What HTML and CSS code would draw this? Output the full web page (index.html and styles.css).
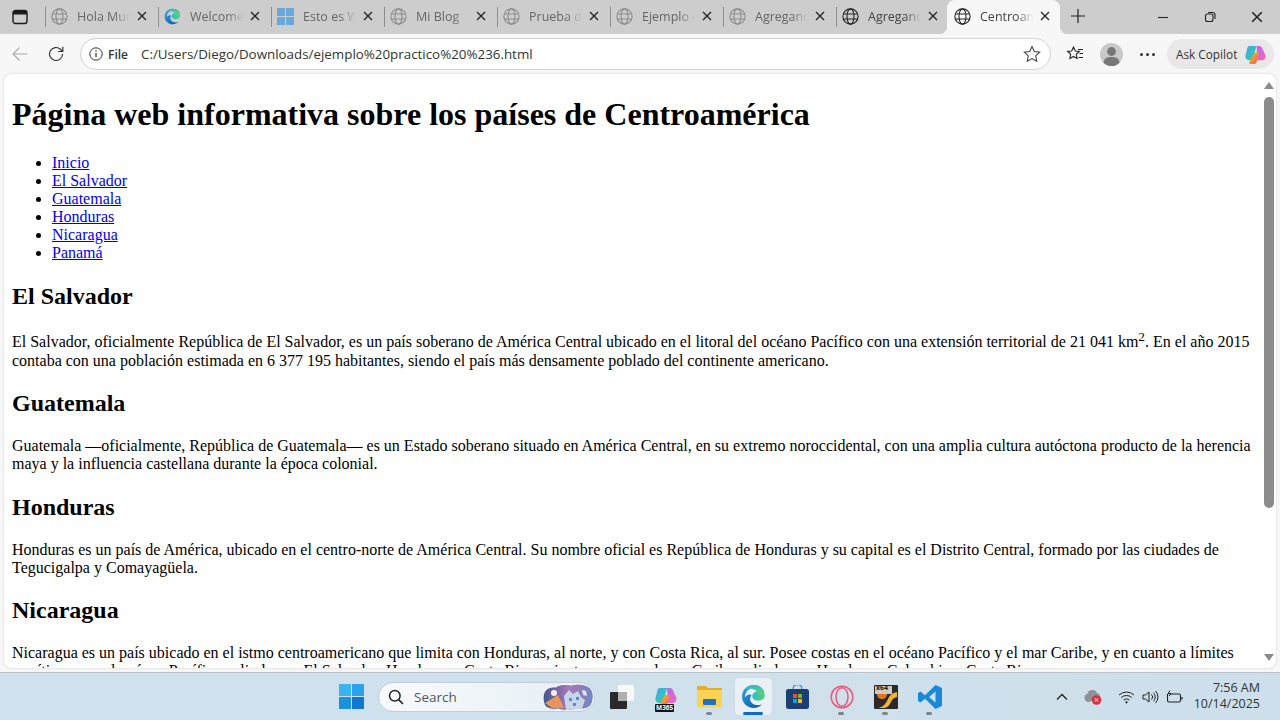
FILE: index.html
```html
<!DOCTYPE html>
<html lang="es">
<head>
<meta charset="utf-8">
<title>Centroamérica</title>
<link rel="stylesheet" href="styles.css">
</head>
<body>
<svg class="defs" width="0" height="0">
  <defs>
    <symbol id="globe" viewBox="0 0 16 16"><g fill="none" stroke="currentColor" stroke-width="1"><circle cx="8" cy="8" r="7.2"/><ellipse cx="8" cy="8" rx="3.3" ry="7.2"/><path d="M1 5.600h14M1 10.400h14"/></g></symbol>
    <symbol id="x" viewBox="0 0 10 10"><path d="M1 1l8 8M9 1l-8 8" fill="none" stroke="currentColor" stroke-width="1.300"/></symbol>
    <linearGradient id="edgeA" x1="0" y1="0" x2="1" y2="1"><stop offset="0" stop-color="#2ba8e6"/><stop offset="1" stop-color="#0b4f9e"/></linearGradient>
    <linearGradient id="edgeB" x1="0" y1="0" x2="1" y2="1"><stop offset="0" stop-color="#27b3d8"/><stop offset="1" stop-color="#63d571"/></linearGradient>
    <linearGradient id="copA" x1="0" y1="0" x2="1" y2="1"><stop offset="0" stop-color="#39a7f0"/><stop offset="1" stop-color="#3fd08f"/></linearGradient>
    <linearGradient id="copB" x1="0" y1="0" x2="1" y2="1"><stop offset="0" stop-color="#b56bf0"/><stop offset="1" stop-color="#f06ab0"/></linearGradient>
    <linearGradient id="copC" x1="0" y1="0" x2="1" y2="1"><stop offset="0" stop-color="#f5c33b"/><stop offset="1" stop-color="#f2553f"/></linearGradient>
    <linearGradient id="artSky" x1="0" y1="0" x2="1" y2="0"><stop offset="0" stop-color="#3d5590"/><stop offset=".5" stop-color="#a878b8"/><stop offset="1" stop-color="#6f87c0"/></linearGradient>
    <symbol id="edge" viewBox="0 0 24 24">
      <path d="M12 1C5.500 1 1 6 1 12c0 6.500 5 11 11 11 3.500 0 6.300-1.200 8.300-3.500-2.500 1.300-7 1.300-9.300-.7-2.500-2.100-3-5.500-.8-7.800C8 9 5 11 3.700 13 4 7 8 3.500 12 3.500c5 0 7 4 6 6.500h4C23 5.500 18.500 1 12 1z" fill="url(#edgeA)"/>
      <path d="M22.800 11c0 3.500-3.500 5.500-6.800 5-3.300-.5-5.200-2-5.200-4.300 0-2.400 2.200-4.200 4.700-4.200 3 0 7.300 0 7.300 3.500z" fill="url(#edgeB)"/>
      <path d="M12 1C8 1 5 3 3.500 6.500 6 4 9 3.800 12 5c3 1.200 4 3 3.500 5h7C23 5.500 18.500 1 12 1z" fill="url(#edgeB)"/>
    </symbol>
    <symbol id="copilot" viewBox="0 0 24 24">
      <path d="M6 3h7l-4 15H6c-3 0-5-2-4.500-5L3 7c.5-2.500 1-4 3-4z" fill="url(#copA)"/>
      <path d="M13 3h3c2 0 3 1.500 3.500 3.500L22.500 13c.5 3-1.500 5-4 5H14z" fill="url(#copB)"/>
      <path d="M11 10h5l-2.500 9c-.5 2-2 3-3.500 3H7c-1.500 0-2-1-1.500-2z" fill="url(#copC)"/>
    </symbol>
  </defs>
</svg>

<header class="tabstrip">
  <div class="strip-menu">
    <svg width="16" height="16" viewBox="0 0 16 16"><rect x="1" y="1.500" width="14" height="13" rx="2.500" fill="none" stroke="#1a1a1a" stroke-width="1.400"/><path d="M1 3.500a2 2 0 0 1 2-2h10a2 2 0 0 1 2 2v2H1z" fill="#1a1a1a"/></svg>
  </div>
  <div class="tab"><svg class="fav dim"><use href="#globe"/></svg><span class="tab-title dim-text">Hola Mundo</span><svg class="tab-x"><use href="#x"/></svg></div>
  <div class="tab"><svg class="fav" viewBox="0 0 24 24"><use href="#edge"/></svg><span class="tab-title dim-text">Welcome</span><svg class="tab-x"><use href="#x"/></svg></div>
  <div class="tab"><svg class="fav" viewBox="0 0 16 16"><path d="M0 0h7.500v7.500H0zM8.500 0H16v7.500H8.500zM0 8.500h7.500V16H0zM8.500 8.500H16V16H8.500z" fill="#6aa8dc"/></svg><span class="tab-title dim-text">Esto es Wix</span><svg class="tab-x"><use href="#x"/></svg></div>
  <div class="tab"><svg class="fav dim"><use href="#globe"/></svg><span class="tab-title dim-text">Mi Blog</span><svg class="tab-x"><use href="#x"/></svg></div>
  <div class="tab"><svg class="fav dim"><use href="#globe"/></svg><span class="tab-title dim-text">Prueba de</span><svg class="tab-x"><use href="#x"/></svg></div>
  <div class="tab"><svg class="fav dim"><use href="#globe"/></svg><span class="tab-title dim-text">Ejemplo 4</span><svg class="tab-x"><use href="#x"/></svg></div>
  <div class="tab"><svg class="fav dim"><use href="#globe"/></svg><span class="tab-title dim-text">Agregando</span><svg class="tab-x"><use href="#x"/></svg></div>
  <div class="tab"><svg class="fav"><use href="#globe"/></svg><span class="tab-title">Agregando</span><svg class="tab-x"><use href="#x"/></svg></div>
  <div class="tab tab-active"><svg class="fav"><use href="#globe"/></svg><span class="tab-title">Centroamérica</span><svg class="tab-x"><use href="#x"/></svg></div>
  <div class="new-tab"><svg width="16" height="16" viewBox="0 0 16 16"><path d="M8 1v14M1 8h14" stroke="#222" stroke-width="1.200" fill="none"/></svg></div>
  <div class="win-controls">
    <svg width="12" height="12" viewBox="0 0 12 12"><path d="M1 6.500h10" stroke="#222" stroke-width="1.100"/></svg>
    <svg width="12" height="12" viewBox="0 0 12 12"><rect x="1.500" y="3" width="7.500" height="7.500" rx="2" fill="none" stroke="#222" stroke-width="1.100"/><path d="M4 1.500h4.500a2.500 2.500 0 0 1 2.500 2.500v4" fill="none" stroke="#222" stroke-width="1.100"/></svg>
    <svg width="12" height="12" viewBox="0 0 10 10"><use href="#x"/></svg>
  </div>
</header>

<nav class="toolbar">
  <svg class="tb-back" width="16" height="16" viewBox="0 0 16 16"><path d="M15.500 8H1M7.500 1.500L1 8l6.500 6.500" fill="none" stroke="#a9a9a9" stroke-width="1.100"/></svg>
  <svg class="tb-reload" width="18" height="18" viewBox="0 0 18 18"><path d="M15.500 9a6.500 6.500 0 1 1-2-4.700L15.500 6.300M15.800 1.800v4.700h-4.700" fill="none" stroke="#333" stroke-width="1.200"/></svg>
  <div class="address">
    <svg class="addr-info" width="14" height="14" viewBox="0 0 14 14"><circle cx="7" cy="7" r="6.200" fill="none" stroke="#333" stroke-width="1"/><path d="M7 6v4.200" stroke="#333" stroke-width="1.200"/><circle cx="7" cy="4" r=".8" fill="#333"/></svg>
    <span class="addr-file">File</span>
    <span class="addr-url">C:/Users/Diego/Downloads/ejemplo%20practico%20%236.html</span>
    <svg class="addr-star" width="18" height="18" viewBox="0 0 18 18"><path d="M9 1.600l2.300 4.900 5.300.7-3.900 3.700 1 5.300L9 13.600l-4.700 2.600 1-5.300L1.400 7.200l5.300-.7z" fill="none" stroke="#444" stroke-width="1.100"/></svg>
  </div>
  <svg class="tb-fav" width="18" height="18" viewBox="0 0 18 18"><path d="M7.500 2l1.800 4 4 .5-3 2.800.8 4.200-3.600-2-3.600 2 .8-4.200-3-2.800 4-.5z" fill="none" stroke="#222" stroke-width="1.100"/><path d="M12 4.500h5M13.500 8.500h3.500M12.500 12.500h4.500" stroke="#222" stroke-width="1"/></svg>
  <div class="avatar"><svg width="23" height="23" viewBox="0 0 23 23"><circle cx="11.500" cy="8.500" r="4.400" fill="#777"/><path d="M3.500 20c0-4.500 3.500-6 8-6s8 1.500 8 6a11 11 0 0 1-16 0z" fill="#777"/></svg></div>
  <div class="dots"><i></i><i></i><i></i></div>
  <div class="copilot-btn"><span>Ask Copilot</span><svg width="23" height="23" viewBox="0 0 24 24"><use href="#copilot"/></svg></div>
</nav>

<main class="viewport">
  <div class="page">
    <h1>Página web informativa sobre los países de Centroamérica</h1>
    <ul>
      <li><a href="#inicio">Inicio</a></li>
      <li><a href="#sv">El Salvador</a></li>
      <li><a href="#gt">Guatemala</a></li>
      <li><a href="#hn">Honduras</a></li>
      <li><a href="#ni">Nicaragua</a></li>
      <li><a href="#pa">Panamá</a></li>
    </ul>
    <h2>El Salvador</h2>
    <p>El Salvador, oficialmente República de El Salvador, es un país soberano de América Central ubicado en el litoral del océano Pacífico con una extensión territorial de 21 041 km<sup>2</sup>. En el año 2015 contaba con una población estimada en 6 377 195 habitantes, siendo el país más densamente poblado del continente americano.</p>
    <h2>Guatemala</h2>
    <p>Guatemala —oficialmente, República de Guatemala— es un Estado soberano situado en América Central, en su extremo noroccidental, con una amplia cultura autóctona producto de la herencia maya y la influencia castellana durante la época colonial.</p>
    <h2>Honduras</h2>
    <p>Honduras es un país de América, ubicado en el centro-norte de América Central. Su nombre oficial es República de Honduras y su capital es el Distrito Central, formado por las ciudades de Tegucigalpa y Comayagüela.</p>
    <h2>Nicaragua</h2>
    <p>Nicaragua es un país ubicado en el istmo centroamericano que limita con Honduras, al norte, y con Costa Rica, al sur. Posee costas en el océano Pacífico y el mar Caribe, y en cuanto a límites marítimos, en el océano Pacífico colinda con El Salvador, Honduras y Costa Rica, mientras que en el mar Caribe colinda con Honduras, Colombia y Costa Rica.</p>
  </div>
  <div class="scrollbar">
    <i class="arrow-up"></i>
    <div class="track"><div class="thumb"></div></div>
    <i class="arrow-down"></i>
  </div>
</main>

<footer class="taskbar">
  <div class="task-center">
    <svg class="start" width="25" height="25" viewBox="0 0 25 25"><path d="M0 0h12v12H0z" fill="#39b4f0"/><path d="M13 0h12v12H13z" fill="#2ba3ea"/><path d="M0 13h12v12H0z" fill="#1c8fdf"/><path d="M13 13h12v12H13z" fill="#0f78cf"/></svg>
    <div class="search">
      <svg width="16" height="16" viewBox="0 0 16 16"><circle cx="6.800" cy="6.800" r="5.300" fill="none" stroke="#222" stroke-width="1.500"/><path d="M10.600 10.600L15 15" stroke="#222" stroke-width="1.600"/></svg>
      <span>Search</span>
      <svg class="search-art" width="52" height="28" viewBox="0 0 52 28">
        <path d="M1 15C1 7 7 3 14 4c3-3 10-3 15-2 7-2 16-1 20 4 3 4 3 11 0 16-3 4-9 5-14 4-6 2-14 2-19 0-5 1-10 0-13-3C2 21 1 18 1 15z" fill="url(#artSky)" stroke="#fff" stroke-width="1"/>
        <circle cx="12" cy="10" r="3" fill="#f6f2ea"/>
        <path d="M3 20l13-8 6 13H10z" fill="#e8955a"/>
        <path d="M22 13l5-6 4 4 5-3 3 6 4 3-3 9-16 1z" fill="#c6d6ea"/>
        <path d="M27 15h3v3h-3zM34 14h3v3h-3zM31 20h3v3h-3z" fill="#6d84b4"/>
        <path d="M40 7l4 1 1 5-4-1z" fill="#dce6f2"/>
      </svg>
    </div>
    <div class="task-icons">
      <div class="ti"><svg width="24" height="24" viewBox="0 0 24 24"><rect x="8" y="0" width="16" height="16" rx="1" fill="#f6f8fa"/><rect x="0" y="7" width="17" height="17" rx="1" fill="#2a2a2a"/><rect x="8" y="7" width="9" height="9" fill="#b0b0b0"/></svg></div>
      <div class="ti ti-m365"><svg width="24" height="24" viewBox="0 0 24 24"><use href="#copilot"/></svg><span>M365</span></div>
      <div class="ti ti-run"><svg width="25" height="23" viewBox="0 0 25 23"><path d="M0 2a1 1 0 0 1 1-1h8l2 2h14v4H0z" fill="#e3ad2a"/><path d="M0 5h25v16a1.500 1.500 0 0 1-1.500 1.500h-22A1.500 1.500 0 0 1 0 21z" fill="#fbd354"/><rect x="6" y="14" width="13" height="6" rx="1" fill="#1a73c8"/></svg></div>
      <div class="ti ti-active"><svg width="25" height="25" viewBox="0 0 24 24"><use href="#edge"/></svg></div>
      <div class="ti"><svg width="23" height="24" viewBox="0 0 23 24"><path d="M7 4a4.500 4.500 0 0 1 9 0" fill="none" stroke="#2f8fd8" stroke-width="1.300"/><rect x="0" y="4" width="23" height="20" rx="2.500" fill="#1c3f73"/><rect x="7" y="9" width="4" height="4" fill="#f25022"/><rect x="12" y="9" width="4" height="4" fill="#7fba00"/><rect x="7" y="14" width="4" height="4" fill="#00a4ef"/><rect x="12" y="14" width="4" height="4" fill="#ffb900"/></svg></div>
      <div class="ti ti-run"><svg width="24" height="24" viewBox="0 0 24 24"><circle cx="12" cy="12" r="10.800" fill="none" stroke="#e85a7a" stroke-width="1.500"/><ellipse cx="12" cy="12" rx="6" ry="9.300" fill="none" stroke="#e85a7a" stroke-width="1.500"/></svg></div>
      <div class="ti ti-run ti-x64"><svg width="24" height="24" viewBox="0 0 24 24"><rect width="24" height="24" rx="1" fill="#2a2a2a"/><rect x="1" y="1" width="17" height="8" fill="#cfcabd"/><path d="M3 9h10c0 3-2 5-5 5s-5-2-5-5z" fill="#e0761c"/><path d="M4 23c6-1 8-5 10-9s4-6 9-7v5c-4 1-5 3-6 5s-3 6-7 6z" fill="#f2b23a"/></svg><span>x64</span></div>
      <div class="ti ti-run"><svg width="24" height="24" viewBox="0 0 24 24"><path d="M17.500 0L24 3v18l-6.500 3L7 13.800 2.500 17.500 0 16V8l2.500-1.500L7 10.200zM17.500 6.500L11 12l6.500 5.500z" fill="#1b8ad6" fill-rule="evenodd"/></svg></div>
    </div>
  </div>
  <div class="tray">
    <svg class="tray-chev" width="12" height="12" viewBox="0 0 12 12"><path d="M1 8.500L6 3.500l5 5" fill="none" stroke="#222" stroke-width="1.300"/></svg>
    <svg class="tray-cloud" width="18" height="16" viewBox="0 0 18 16"><path d="M5 13A4.200 4.200 0 0 1 3.500 4.800 5 5 0 0 1 13 4a4 4 0 0 1 3 4" fill="#8d9298"/><circle cx="12.500" cy="11" r="4.800" fill="#d8303c"/><path d="M10.800 9.300l3.400 3.400M14.200 9.300l-3.400 3.400" stroke="#fff" stroke-width="1"/></svg>
    <svg class="tray-wifi" width="17" height="14" viewBox="0 0 17 14"><path d="M1 5a11 11 0 0 1 15 0M3.300 7.500a7.700 7.700 0 0 1 10.400 0M5.700 10a4.300 4.300 0 0 1 5.600 0" fill="none" stroke="#222" stroke-width="1"/><circle cx="8.500" cy="12.300" r="1.100" fill="#222"/></svg>
    <svg class="tray-vol" width="17" height="14" viewBox="0 0 17 14"><path d="M1 5v4h2.500L7 12V2L3.500 5z" fill="none" stroke="#222" stroke-width="1"/><path d="M9.500 4.500a3.500 3.500 0 0 1 0 5M11.500 2.800a6 6 0 0 1 0 8.400M13.500 1a8.500 8.500 0 0 1 0 12" fill="none" stroke="#222" stroke-width="1"/></svg>
    <svg class="tray-bat" width="17" height="14" viewBox="0 0 17 14"><path d="M4 4h9a1.500 1.500 0 0 1 1.500 1.500v5A1.500 1.500 0 0 1 13 12H3a1.500 1.500 0 0 1-1.500-1.500V4" fill="none" stroke="#222" stroke-width="1.100"/><path d="M16 7v2.500" stroke="#222" stroke-width="1.200"/><path d="M4 .5L2 3.500h3L3 6" fill="none" stroke="#222" stroke-width="1"/></svg>
    <div class="clock"><div>7:56 AM</div><div>10/14/2025</div></div>
  </div>
</footer>
</body>
</html>
```
FILE: styles.css
```css
* { box-sizing: border-box; }
html, body { margin: 0; height: 100%; overflow: hidden; }
body {
  width: 1280px; height: 720px;
  display: flex; flex-direction: column;
  background: #f7f7f7;
  font-family: "Open Sans", "Noto Sans", sans-serif;
  color: #222;
}
.defs { position: absolute; }

/* Tab strip */
.tabstrip {
  height: 34px; flex: none;
  display: flex; align-items: stretch;
  background: #cdcdcd;
}
.strip-menu { width: 45px; display: flex; align-items: center; justify-content: center; padding-right: 6px; }
.tab {
  width: 113px; flex: none;
  display: flex; align-items: center;
  padding: 0 11px 2px 6px;
  position: relative;
  font-size: 12.5px;
}
.tab::before {
  content: ""; position: absolute; left: 0; top: 7px; bottom: 7px;
  width: 1px; background: #8e8e8e;
}
.tab-active {
  background: #f7f7f7;
  border-radius: 8px 8px 0 0;
  margin-left: -2px;
  padding-left: 7px;
  padding-right: 10px;
}
.tab-active::before {
  left: -8px; top: auto; bottom: 0; width: 8px; height: 8px;
  background: radial-gradient(circle at 0 0, transparent 8px, #f7f7f7 8.500px);
}
.tab-active::after {
  content: ""; position: absolute; right: -8px; bottom: 0; width: 8px; height: 8px;
  background: radial-gradient(circle at 100% 0, transparent 8px, #f7f7f7 8.500px);
}
.fav { width: 17px; height: 17px; flex: none; color: #222; }
.fav.dim { color: #8b8b8b; }
.tab-title {
  flex: 1; min-width: 0; margin-left: 9px;
  white-space: nowrap; overflow: hidden;
  color: #444;
  -webkit-mask-image: linear-gradient(to right, #000 70%, transparent 100%);
  mask-image: linear-gradient(to right, #000 70%, transparent 100%);
}
.dim-text { color: #666; }
.tab-x { width: 10px; height: 10px; flex: none; margin-left: 7px; color: #222; }
.new-tab { width: 36px; display: flex; align-items: center; justify-content: center; padding-bottom: 3px; }
.win-controls {
  margin-left: auto; display: flex; align-items: center;
  gap: 35px; padding: 0 17px 0 0; color: #222;
}

/* Toolbar */
.toolbar {
  height: 40px; flex: none;
  display: flex; align-items: center;
  background: #f7f7f7;
  padding: 0 5px 0 12px;
}
.tb-back { flex: none; }
.tb-reload { flex: none; margin-left: 19px; }
.address {
  flex: none; width: 971px; height: 32px; margin-left: 15px;
  display: flex; align-items: center;
  background: #fff; border: 1px solid #d3d3d3; border-radius: 16px;
  padding: 0 9px 0 8px;
}
.addr-info { flex: none; }
.addr-file { font-size: 12px; font-weight: 600; margin-left: 5px; color: #333; }
.addr-url { font-size: 13.36px; margin-left: 13px; color: #333; white-space: nowrap; }
.addr-star { margin-left: auto; flex: none; }
.tb-fav { flex: none; margin-left: 15px; }
.avatar {
  flex: none; width: 23px; height: 23px; margin-left: 16px;
  border-radius: 50%; background: #c9c9c9; overflow: hidden;
}
.avatar svg { display: block; }
.dots { flex: none; display: flex; gap: 3px; margin-left: 17px; }
.dots i { width: 3px; height: 3px; border-radius: 50%; background: #333; }
.copilot-btn {
  flex: none; margin-left: 12px; height: 30px; width: 107px;
  display: flex; align-items: center; justify-content: space-between;
  background: #e8e8e8; border-radius: 15px;
  padding: 0 7px 0 9px;
  font-size: 11.8px; color: #333; white-space: nowrap;
}

/* Viewport */
.viewport {
  flex: none; height: 594px; margin: 0 4px 0 4px;
  display: flex;
  background: #fff; border-radius: 8px;
  overflow: hidden;
  box-shadow: 0 0 2px rgba(0, 0, 0, .2);
}
.page {
  flex: 1; min-width: 0; height: 100%; overflow: hidden;
  padding: 22.4px 8px 0;
  font-family: "Liberation Serif", "Times New Roman", serif;
  font-size: 16px; color: #000;
}
.page h1 { font-size: 32px; font-weight: bold; margin: 0 0 20.5px; }
.page ul { margin: 16px 0; padding-left: 40px; }
.page a { color: #00e; }
.page h2 { font-size: 24px; font-weight: bold; margin: 20.7px 0 19.8px; }
.page p { margin: 16px 0; }
.scrollbar {
  flex: none; width: 14px; margin-right: 0;
  display: flex; flex-direction: column; align-items: center;
  padding: 8px 0 7px;
}
.arrow-up, .arrow-down { width: 0; height: 0; border-left: 5px solid transparent; border-right: 5px solid transparent; flex: none; }
.arrow-up { border-bottom: 7px solid #8a8a8a; }
.arrow-down { border-top: 7px solid #8a8a8a; }
.track { flex: 1; width: 100%; padding: 8px 2px; }
.thumb { width: 10px; height: 411px; background: #8c8c8c; border-radius: 5px; }

/* Taskbar */
.taskbar {
  flex: none; height: 48px; margin-top: 4px;
  display: flex; align-items: center;
  padding-left: 339px;
  background: linear-gradient(90deg, #cfe1ee, #d0e1ec 50%, #cddfea);
  border-top: 1px solid #b9c4cc;
}
.task-center { display: flex; align-items: center; }
.start { flex: none; }
.search {
  width: 217px; height: 30px; margin-left: 14px;
  display: flex; align-items: center;
  background: linear-gradient(90deg, #f7fafc, #e6eff5);
  border: 1px solid #c3cdd4; border-radius: 15px;
  padding: 0 0 0 9px;
  font-size: 13.5px; color: #555;
}
.search span { margin-left: 10px; }
.search-art { margin-left: auto; flex: none; }
.task-icons { display: flex; align-items: center; margin-left: 8px; }
.ti {
  width: 37px; height: 37px; margin-right: 7px;
  display: flex; align-items: center; justify-content: center;
  position: relative; border-radius: 4px;
}
.ti-run::after {
  content: ""; position: absolute; left: 15px; bottom: 0;
  width: 6px; height: 3px; border-radius: 2px; background: #7d878e;
}
.ti-active { background: #eaf1f6; box-shadow: 0 0 1px #b5c0c8; }
.ti-active::after {
  content: ""; position: absolute; left: 8px; bottom: 0;
  width: 20px; height: 3px; border-radius: 2px; background: #0a6cc4;
}
.ti-m365 span {
  position: absolute; left: 8px; bottom: 3px; padding: 0 1px;
  background: #111; color: #fff; font-size: 6.500px; font-weight: 700; line-height: 8px;
  border-radius: 1px;
}
.ti-x64 span {
  position: absolute; left: 9px; top: 6px;
  color: #222; font-size: 7px; font-weight: 700; line-height: 8px;
}
.tray { margin-left: auto; display: flex; align-items: center; padding-right: 20px; }
.tray-cloud { margin-left: 16px; }
.tray-wifi { margin-left: 16px; }
.tray-vol { margin-left: 7px; }
.tray-bat { margin-left: 7px; }
.clock { margin-left: 11px; padding-bottom: 1px; text-align: right; font-size: 12.5px; line-height: 16px; color: #333; }
```
